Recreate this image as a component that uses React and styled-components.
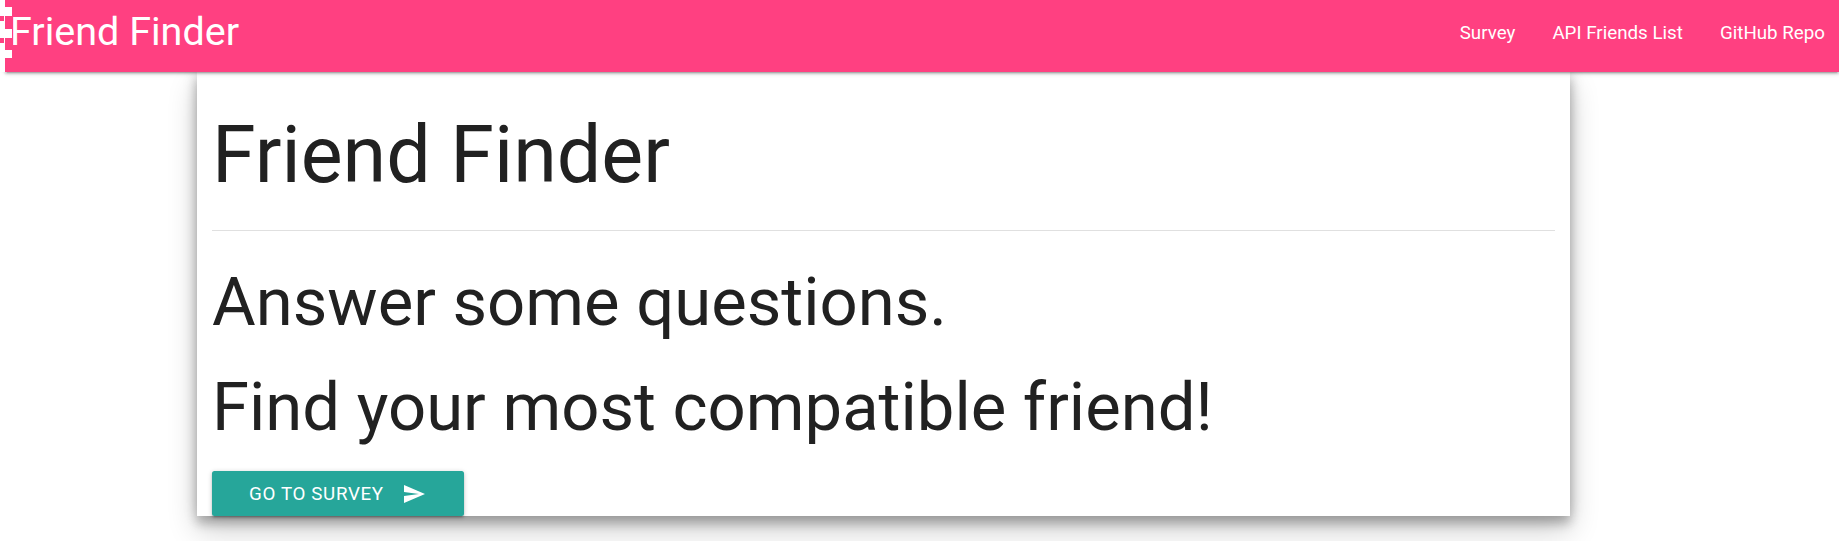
import React from 'react';
import styled, { createGlobalStyle } from 'styled-components';

const GlobalStyle = createGlobalStyle`
  html, body {
    margin: 0;
    padding: 0;
    background: #fff;
    font-family: Roboto, "Noto Sans", sans-serif;
    color: rgba(0, 0, 0, 0.87);
  }
`;

const Page = styled.div`
  width: 1839px;
  height: 541px;
  overflow: hidden;
  display: flex;
  flex-direction: column;
`;

const HeaderRow = styled.header`
  position: relative;
  z-index: 2;
  display: flex;
  height: 72px;
`;

const Handle = styled.svg`
  flex: 0 0 auto;
  display: block;
  margin-right: -8px;
  position: relative;
  z-index: 1;
`;

const Nav = styled.nav`
  flex: 1;
  display: flex;
  justify-content: space-between;
  align-items: flex-start;
  background: #ff4081;
  color: #fff;
  padding: 0 14px 0 5px;
  box-shadow: 0 2px 2px 0 rgba(0, 0, 0, 0.14), 0 3px 1px -2px rgba(0, 0, 0, 0.12),
    0 1px 5px 0 rgba(0, 0, 0, 0.2);
`;

const Brand = styled.a`
  font-size: 39.5px;
  line-height: 63px;
  color: #fff;
  text-decoration: none;
  white-space: nowrap;
`;

const NavList = styled.ul`
  display: flex;
  gap: 37px;
  margin: 0;
  padding: 0;
  list-style: none;
`;

const NavLink = styled.a`
  display: block;
  font-size: 18.75px;
  line-height: 67px;
  color: #fff;
  text-decoration: none;
  white-space: nowrap;
`;

const Main = styled.main`
  position: relative;
  z-index: 1;
  padding-left: 197px;
`;

const Card = styled.section`
  display: flow-root;
  width: 1373px;
  box-sizing: border-box;
  background: #fff;
  padding: 0 15px;
  box-shadow: 0 14px 28px 0 rgba(0, 0, 0, 0.2), 0 8px 10px 0 rgba(0, 0, 0, 0.2),
    0 0 14px 0 rgba(0, 0, 0, 0.16);
`;

const Title = styled.h1`
  margin: 39px 0 31px;
  font-size: 79px;
  line-height: 88px;
  font-weight: 400;
  color: #212121;
`;

const Divider = styled.hr`
  margin: 0;
  border: 0;
  border-top: 1px solid #e0e0e0;
`;

const Tagline = styled.h2`
  margin: ${(props) => (props.first ? '34px' : '31px')} 0 0;
  font-size: 67px;
  line-height: 74px;
  font-weight: 400;
  color: #212121;
`;

const Button = styled.a`
  display: inline-flex;
  align-items: center;
  height: 45px;
  margin-top: 27px;
  padding: 0 38px 0 37px;
  background: #26a69a;
  color: #fff;
  border-radius: 2.5px;
  font-size: 18.75px;
  letter-spacing: 0.65px;
  text-transform: uppercase;
  text-decoration: none;
  box-shadow: 0 2px 2px 0 rgba(0, 0, 0, 0.14), 0 3px 1px -2px rgba(0, 0, 0, 0.12),
    0 1px 5px 0 rgba(0, 0, 0, 0.2);
`;

const SendIcon = styled.svg`
  margin-left: 18px;
  fill: #fff;
`;

const links = ['Survey', 'API Friends List', 'GitHub Repo'];

const App = () => (
  <Page>
    <GlobalStyle />
    <HeaderRow>
      <Handle width="13" height="72" viewBox="0 0 13 72">
        <rect x="0" y="0" width="5" height="72" fill="#fff" />
        <rect x="5" y="0" width="8" height="72" fill="#ff4081" />
        <rect x="0" y="7" width="12" height="9" fill="#fff" />
        <rect x="0" y="29" width="12" height="9" fill="#fff" />
        <rect x="0" y="50" width="12" height="8" fill="#fff" />
        <rect x="0" y="16" width="4" height="5" fill="#ff4081" />
        <rect x="0" y="38" width="4" height="5" fill="#ff4081" />
      </Handle>
      <Nav>
        <Brand href="#">Friend Finder</Brand>
        <NavList>
          {links.map((label) => (
            <li key={label}>
              <NavLink href="#">{label}</NavLink>
            </li>
          ))}
        </NavList>
      </Nav>
    </HeaderRow>
    <Main>
      <Card>
        <Title>Friend Finder</Title>
        <Divider />
        <Tagline first>Answer some questions.</Tagline>
        <Tagline>Find your most compatible friend!</Tagline>
        <Button href="#">
          Go to survey
          <SendIcon width="24" height="24" viewBox="0 0 24 24">
            <path d="M2.01 21L23 12 2.01 3 2 10l15 2-15 2z" />
          </SendIcon>
        </Button>
      </Card>
    </Main>
  </Page>
);

export default App;
